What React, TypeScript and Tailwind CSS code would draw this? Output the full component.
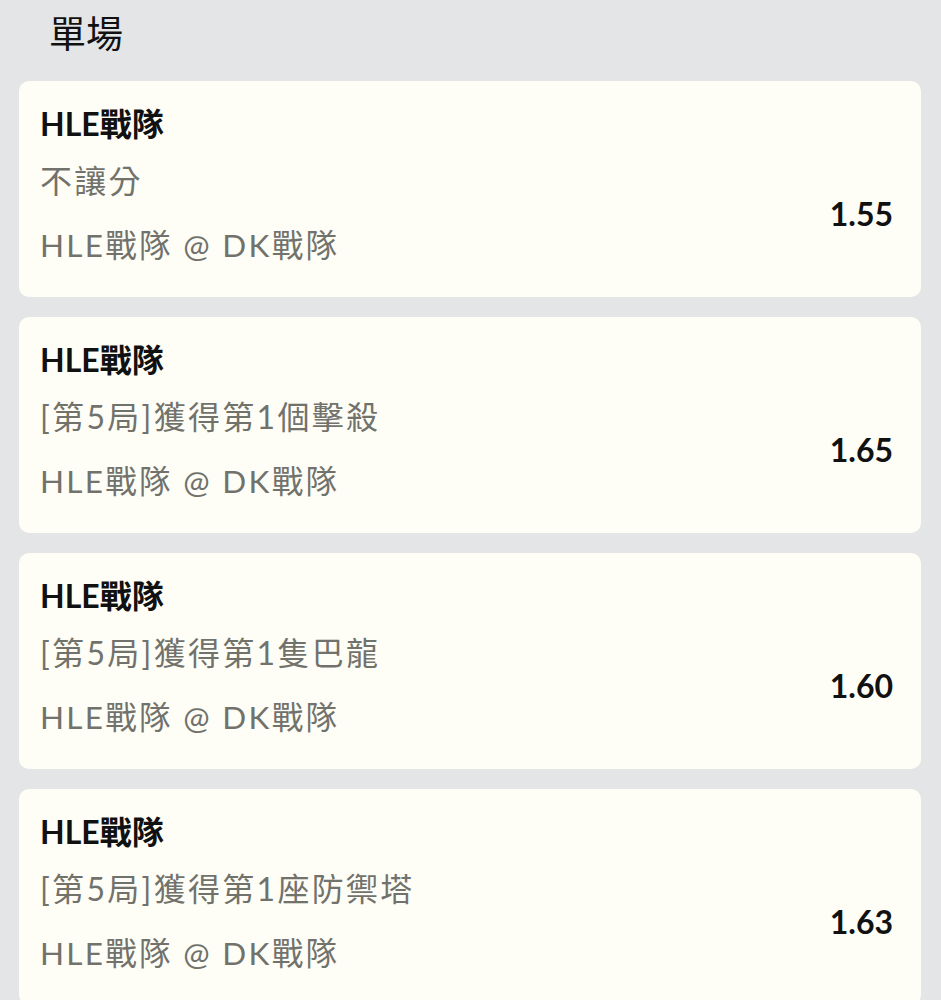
import React from "react";

const items = [
  { market: "不讓分", odds: "1.55" },
  { market: "[第5局]獲得第1個擊殺", odds: "1.65" },
  { market: "[第5局]獲得第1隻巴龍", odds: "1.60" },
  { market: "[第5局]獲得第1座防禦塔", odds: "1.63" },
];

export default function App() {
  return (
    <div
      className="min-h-screen w-[941px] bg-[#e4e5e7] overflow-hidden"
      style={{ fontFamily: 'Lato, "Noto Sans CJK TC", sans-serif' }}
    >
      <div className="pl-[49px] pt-[12px] h-[81px] text-[37px] leading-[44px] text-[#111]">單場</div>
      <div className="flex flex-col gap-[20px] pl-[19px] pr-[20px]">
        {items.map((it, i) => (
          <div
            key={i}
            className="h-[216px] rounded-[10px] bg-[#fffef6] flex pl-[21px] pr-[28px]"
          >
            <div className="flex-1 flex flex-col pt-[23px]">
              <div className="text-[32px] leading-[40px] font-bold text-[#111]">HLE戰隊</div>
              <div className="mt-[17px] text-[32px] leading-[40px] text-[#72726d] tracking-[2.3px]">
                {it.market}
              </div>
              <div className="mt-[24px] text-[31.5px] leading-[40px] text-[#72726d] tracking-[2.3px]">
                HLE戰隊 @ DK戰隊
              </div>
            </div>
            <div className="pt-[113px] text-[32px] font-bold text-[#111] leading-[40px]">{it.odds}</div>
          </div>
        ))}
      </div>
    </div>
  );
}
